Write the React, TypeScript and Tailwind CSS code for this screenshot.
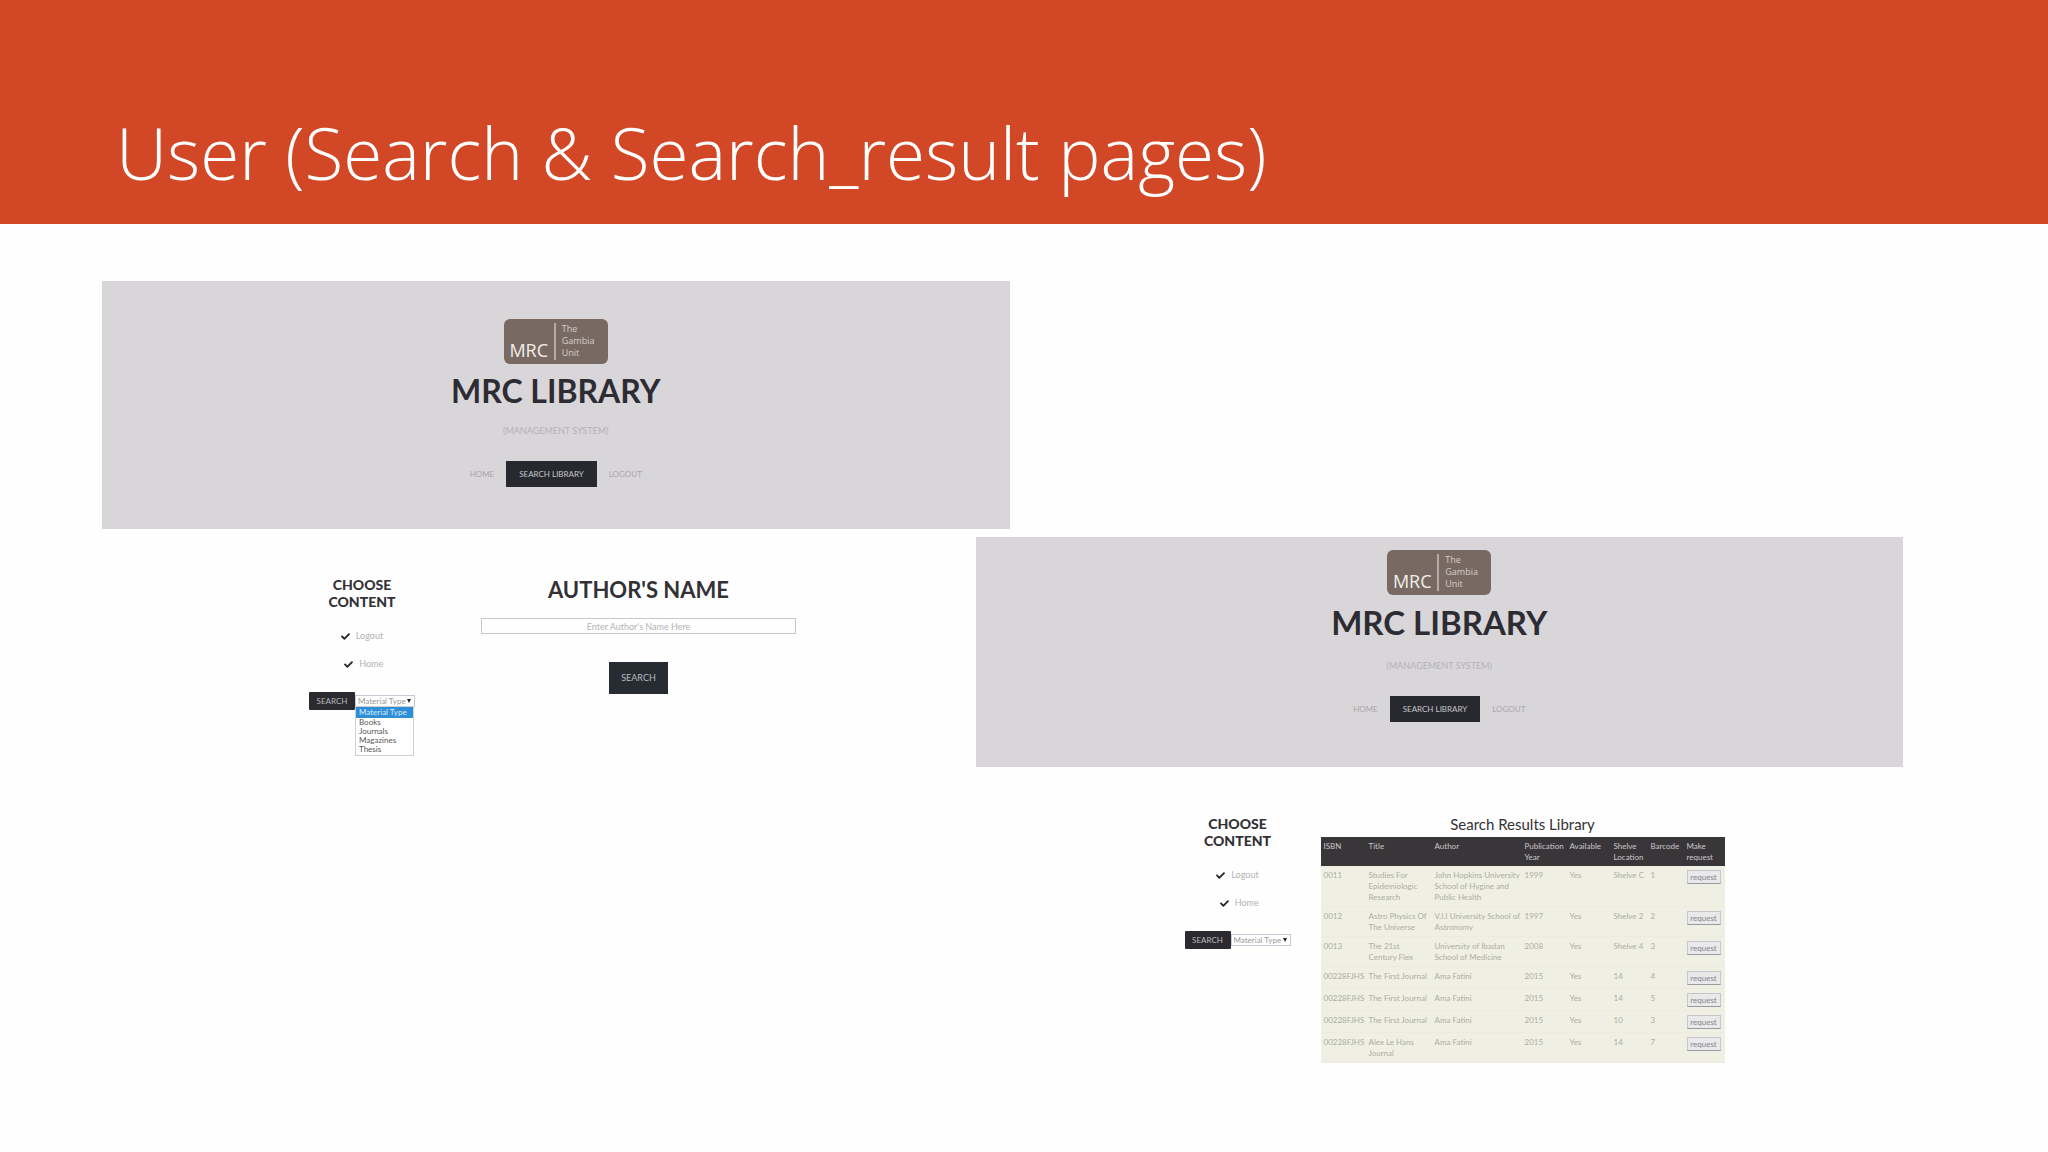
import { FaCheck } from "react-icons/fa";
import clsx from "clsx";

const materials = ["Books", "Journals", "Magazines", "Thesis"];

const columns = [
    { label: "ISBN", width: "w-[45px]" },
    { label: "Title", width: "w-[66px]" },
    { label: "Author", width: "w-[90px]" },
    { label: "Publication Year", width: "w-[45px]" },
    { label: "Available", width: "w-[44px]" },
    { label: "Shelve Location", width: "w-[37px]" },
    { label: "Barcode", width: "w-[36px]" },
    { label: "Make request", width: "w-[41px]" },
];

const results = [
    ["0011", "Studies For\nEpidemiologic\nResearch", "John Hopkins University\nSchool of Hygine and\nPublic Health", "1999", "Yes", "Shelve C", "1"],
    ["0012", "Astro Physics Of\nThe Universe", "V.I.I University School of\nAstronomy", "1997", "Yes", "Shelve 2", "2"],
    ["0013", "The 21st\nCentury Flex", "University of Ibadan\nSchool of Medicine", "2008", "Yes", "Shelve 4", "3"],
    ["00228FJHS", "The First Journal", "Ama Fatini", "2015", "Yes", "14", "4"],
    ["00228FJHS", "The First Journal", "Ama Fatini", "2015", "Yes", "14", "5"],
    ["00228FJHS", "The First Journal", "Ama Fatini", "2015", "Yes", "10", "3"],
    ["00228FJHS", "Alex Le Hans\nJournal", "Ama Fatini", "2015", "Yes", "14", "7"],
];

const Logo = () => {
    return (
        <div className="flex h-[45px] w-[104px] items-stretch rounded-md bg-[#786a62] py-1 text-[#f3eeec]">
            <div className="flex w-[52px] items-end justify-center border-r-2 border-[#b5aaa5] font-['Open_Sans'] text-lg leading-5">MRC</div>
            <div className="pl-1.5 font-['Open_Sans'] text-[9px] leading-3 text-[#d5cdc8]">
                The
                <br />
                Gambia
                <br />
                Unit
            </div>
        </div>
    );
};

const Banner = ({ className, titleClass, subtitleClass }: { className: string; titleClass: string; subtitleClass: string }) => {
    return (
        <header className={clsx("flex flex-col items-center bg-[#d8d6d9]", className)}>
            <Logo />
            <h2 className={clsx("mt-[7px] font-bold leading-10 text-[#2e2c33]", titleClass)}>MRC LIBRARY</h2>
            <p className={clsx("text-[9px] leading-4 text-[#b5b2b6]", subtitleClass)}>(MANAGEMENT SYSTEM)</p>
            <nav className="mt-[22px] flex items-center gap-3 text-[8px] leading-3 text-[#a9a6aa]">
                <a href="#home">HOME</a>
                <a href="#search" className="bg-[#28292f] px-[13px] py-[7px] text-[#c4c6ca]">
                    SEARCH LIBRARY
                </a>
                <a href="#logout">LOGOUT</a>
            </nav>
        </header>
    );
};

const Sidebar = ({ id, open }: { id: string; open?: boolean }) => {
    return (
        <aside className="flex shrink-0 flex-col items-center">
            <h3 className="text-center text-sm font-black leading-[17px] text-[#333136]">
                CHOOSE
                <br />
                CONTENT
            </h3>
            <ul className="mt-5 flex flex-col items-end gap-4 text-[9px] leading-3 text-[#b2b2b2]">
                <li className="flex items-center gap-1.5">
                    <FaCheck className="size-[9px] text-[#222]" />
                    <a href="#logout">Logout</a>
                </li>
                <li className="flex items-center gap-1.5">
                    <FaCheck className="size-[9px] text-[#222]" />
                    <a href="#home">Home</a>
                </li>
            </ul>
            <div className="mt-[22px] flex items-center">
                <button className="w-[46px] rounded-[1px] bg-[#2b2a2e] text-[8px] leading-[18px] text-[#b9b9bb]">SEARCH</button>
                <div className="relative">
                    <select
                        id={id}
                        aria-label="Material Type"
                        className="block h-3 w-[60px] appearance-none border border-[#c9c9d6] bg-white pl-0.5 text-[8px] leading-[10px] text-[#999]"
                    >
                        <option>Material Type</option>
                        {materials.map((m) => (
                            <option key={m}>{m}</option>
                        ))}
                    </select>
                    <svg viewBox="0 0 4 4" className="pointer-events-none absolute right-1 top-1 size-1 fill-[#222]">
                        <path d="M0 0h4L2 4z" />
                    </svg>
                    {open && (
                        <ul className="absolute left-0 top-[11px] w-[59px] border border-[#cfcfd6] bg-white pb-px text-[8px] leading-[9px] text-[#555]">
                            <li className="bg-[#2f8fd6] pl-[3px] leading-[11px] text-[#d8ecfa]">Material Type</li>
                            {materials.map((m) => (
                                <li key={m} className="pl-[3px]">
                                    {m}
                                </li>
                            ))}
                        </ul>
                    )}
                </div>
            </div>
        </aside>
    );
};

const SearchPage = () => {
    return (
        <section className="min-w-0 flex-[908]">
            <Banner className="h-[248px] pt-[38px]" titleClass="text-[32px]" subtitleClass="mt-3" />
            <div className="flex gap-[66px] pl-[207px] pt-[47px]">
                <Sidebar id="search-material" open />
                <form className="flex w-[315px] flex-col items-center">
                    <label htmlFor="author" className="text-[22px] font-bold leading-7 text-[#333136]">
                        AUTHOR'S NAME
                    </label>
                    <input
                        id="author"
                        type="text"
                        placeholder="Enter Author's Name Here"
                        className="mt-[14px] h-4 w-full border border-[#c8c8cc] text-center text-[9px] placeholder:text-[#b4b4b4]"
                    />
                    <button type="button" className="mt-7 h-8 w-[59px] bg-[#272c32] text-[9px] text-[#b9bcc0]">
                        SEARCH
                    </button>
                </form>
            </div>
        </section>
    );
};

const ResultPage = () => {
    return (
        <section className="-ml-[34px] mt-64 min-w-0 flex-[928]">
            <Banner className="h-[230px] pt-[13px]" titleClass="text-[33px]" subtitleClass="mt-4" />
            <div className="flex gap-[30px] pl-[209px] pt-12">
                <Sidebar id="result-material" />
                <div className="w-[404px]">
                    <h3 className="mb-1 text-center text-[15px] leading-[18px] text-[#333136]">Search Results Library</h3>
                    <table className="w-full table-fixed text-left text-[8px] leading-[11px] text-[#adada1]">
                        <thead>
                            <tr className="bg-[#393639] align-top text-[#c9c7c9]">
                                {columns.map((c) => (
                                    <th key={c.label} className={clsx("pb-[3px] pl-[3px] pt-1 font-normal", c.width)}>
                                        {c.label}
                                    </th>
                                ))}
                            </tr>
                        </thead>
                        <tbody>
                            {results.map((row, i) => (
                                <tr key={i} className="border-b border-[#ebebdf] bg-[#eff0e3] align-top">
                                    {row.map((cell, j) => (
                                        <td key={j} className="whitespace-pre pb-[3px] pl-[3px] pt-1">
                                            {cell}
                                        </td>
                                    ))}
                                    <td className="pb-[3px] pl-[3px] pt-1">
                                        <button className="block h-3.5 w-[34px] border border-[#c6c6cc] border-b-[#9a9aa4] bg-[#e9e9ea] text-[8px] leading-3 text-[#85858c]">
                                            request
                                        </button>
                                    </td>
                                </tr>
                            ))}
                        </tbody>
                    </table>
                </div>
            </div>
        </section>
    );
};

export default function App() {
    return (
        <main className="min-h-screen bg-[#fefefe] font-['Lato',sans-serif]">
            <div className="h-56 bg-[#d24726] pl-[116px] pt-[101px]">
                <h1 className="whitespace-nowrap font-['Open_Sans',sans-serif] text-[71px] font-light leading-[104px] text-white">
                    User (Search &amp; Search_result pages)
                </h1>
            </div>
            <div className="flex items-start pl-[102px] pr-[145px] pt-[57px]">
                <SearchPage />
                <ResultPage />
            </div>
        </main>
    );
}
